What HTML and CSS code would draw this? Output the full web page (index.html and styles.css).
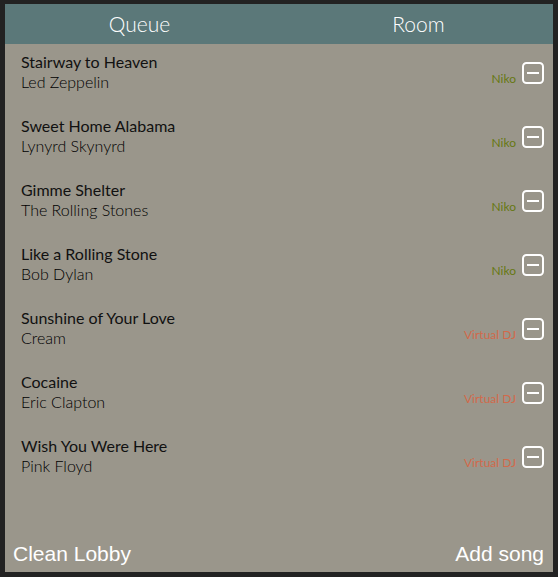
FILE: index.html
```html
<!DOCTYPE html>
<html>
<head>
<meta charset="utf-8">
<link rel="stylesheet" href="styles.css">
</head>
<body>
<div class="panel">
  <div class="tabs">
    <div class="tab tab-left">Queue</div>
    <div class="tab tab-right">Room</div>
  </div>
  <div class="list">
    <div class="song">
      <div class="info"><div class="title">Stairway to Heaven</div><div class="artist">Led Zeppelin</div></div>
      <div class="side"><span class="by niko">Niko</span><svg class="rm" viewBox="0 0 22 22"><rect x="1" y="1" width="20" height="20" rx="3.5"/><line x1="5" y1="11" x2="17" y2="11"/></svg></div>
    </div>
    <div class="song">
      <div class="info"><div class="title">Sweet Home Alabama</div><div class="artist">Lynyrd Skynyrd</div></div>
      <div class="side"><span class="by niko">Niko</span><svg class="rm" viewBox="0 0 22 22"><rect x="1" y="1" width="20" height="20" rx="3.5"/><line x1="5" y1="11" x2="17" y2="11"/></svg></div>
    </div>
    <div class="song">
      <div class="info"><div class="title">Gimme Shelter</div><div class="artist">The Rolling Stones</div></div>
      <div class="side"><span class="by niko">Niko</span><svg class="rm" viewBox="0 0 22 22"><rect x="1" y="1" width="20" height="20" rx="3.5"/><line x1="5" y1="11" x2="17" y2="11"/></svg></div>
    </div>
    <div class="song">
      <div class="info"><div class="title">Like a Rolling Stone</div><div class="artist">Bob Dylan</div></div>
      <div class="side"><span class="by niko">Niko</span><svg class="rm" viewBox="0 0 22 22"><rect x="1" y="1" width="20" height="20" rx="3.5"/><line x1="5" y1="11" x2="17" y2="11"/></svg></div>
    </div>
    <div class="song">
      <div class="info"><div class="title">Sunshine of Your Love</div><div class="artist">Cream</div></div>
      <div class="side"><span class="by dj">Virtual DJ</span><svg class="rm" viewBox="0 0 22 22"><rect x="1" y="1" width="20" height="20" rx="3.5"/><line x1="5" y1="11" x2="17" y2="11"/></svg></div>
    </div>
    <div class="song">
      <div class="info"><div class="title">Cocaine</div><div class="artist">Eric Clapton</div></div>
      <div class="side"><span class="by dj">Virtual DJ</span><svg class="rm" viewBox="0 0 22 22"><rect x="1" y="1" width="20" height="20" rx="3.5"/><line x1="5" y1="11" x2="17" y2="11"/></svg></div>
    </div>
    <div class="song">
      <div class="info"><div class="title">Wish You Were Here</div><div class="artist">Pink Floyd</div></div>
      <div class="side"><span class="by dj">Virtual DJ</span><svg class="rm" viewBox="0 0 22 22"><rect x="1" y="1" width="20" height="20" rx="3.5"/><line x1="5" y1="11" x2="17" y2="11"/></svg></div>
    </div>
  </div>
  <div class="actions">
    <span class="btn">Clean Lobby</span>
    <span class="btn">Add song</span>
  </div>
</div>
</body>
</html>
```

FILE: styles.css
```css
html, body {
  margin: 0;
  padding: 0;
  background: #222222;
}
body {
  padding: 4px 5px 5px 5px;
  height: 577px;
  box-sizing: border-box;
}
.panel {
  width: 548px;
  height: 568px;
  background: #9a968b;
  display: flex;
  flex-direction: column;
  font-family: Lato, "Open Sans", sans-serif;
}
.tabs {
  height: 40px;
  background: #5b7879;
  display: flex;
}
.tab {
  flex: 1;
  text-align: center;
  color: #ffffff;
  font-weight: 300;
  font-size: 21px;
  line-height: 40px;
}
.tab-left { padding-right: 6px; }
.tab-right { padding-left: 4px; }
.list {
  flex: 1;
}
.song {
  height: 64px;
  box-sizing: border-box;
  padding: 8px 9px 0 16px;
  display: flex;
}
.info {
  flex: 1;
}
.title {
  font-size: 16px;
  line-height: 20px;
  color: #111111;
}
.artist {
  font-size: 16px;
  line-height: 19px;
  font-weight: 300;
  color: #000000;
}
.side {
  display: flex;
  gap: 6px;
  height: 40px;
  padding-top: 1px;
  box-sizing: border-box;
  align-self: flex-start;
  align-items: center;
}
.by {
  font-size: 12px;
  line-height: 14px;
  align-self: flex-end;
  margin-bottom: 6px;
}
.niko { color: #667812; }
.dj { color: #d2694a; }
.rm {
  width: 22px;
  height: 22px;
  fill: none;
  stroke: #ffffff;
  stroke-width: 2;
}
.actions {
  display: flex;
  justify-content: space-between;
  padding: 0 9px 6px 8px;
}
.btn {
  font-family: "Liberation Sans", Arial, sans-serif;
  color: #ffffff;
  font-size: 21px;
  line-height: 24px;
}
```
